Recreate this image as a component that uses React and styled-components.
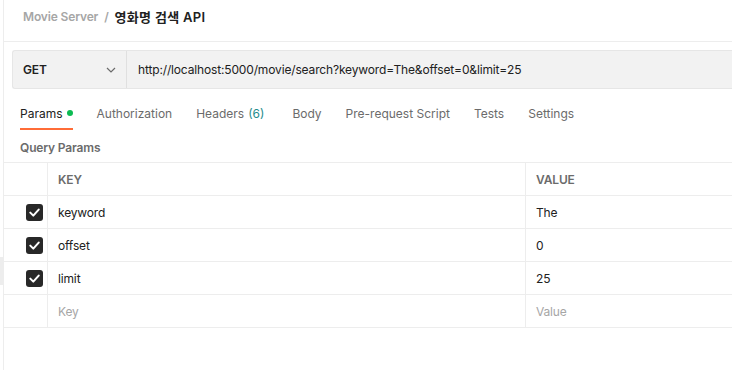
import React from 'react';
import styled, { createGlobalStyle } from 'styled-components';

const GlobalStyle = createGlobalStyle`
  body {
    margin: 0;
    background: #fff;
    font-family: Inter, "Noto Sans", "Noto Sans CJK KR", sans-serif;
    letter-spacing: -0.15px;
    color: #212121;
  }
`;

const Page = styled.div`
  display: flex;
  width: 732px;
  height: 370px;
  overflow: hidden;
  background: #fff;
`;

const SideStrip = styled.div`
  width: 3px;
  flex-shrink: 0;
  border-right: 1px solid #ededed;
  padding-top: 257px;
`;

const SideMark = styled.div`
  height: 28px;
  background: #ededed;
`;

const Main = styled.div`
  flex: 1;
  display: flex;
  flex-direction: column;
  min-width: 0;
`;

const Header = styled.header`
  height: 33px;
  padding: 0 19px 8px;
  display: flex;
  align-items: center;
  gap: 6px;
  border-bottom: 1px solid #ededed;
  font-size: 12px;
  font-weight: 600;
`;

const Crumb = styled.span`
  color: ${({ muted }) => (muted ? '#a6a6a6' : '#212121')};
  font-size: ${({ muted }) => (muted ? 12 : 13)}px;
  letter-spacing: ${({ muted }) => (muted ? '-0.15px' : '0.3px')};
`;

const UrlBar = styled.div`
  display: flex;
  height: 37px;
  margin: 8px 0 0 8px;
  border: 1px solid #e6e6e6;
  border-right: none;
  border-radius: 3px 0 0 3px;
  background: #f2f2f2;
`;

const Method = styled.div`
  width: 114px;
  display: flex;
  align-items: center;
  justify-content: space-between;
  padding: 0 10px 0 10px;
  box-sizing: border-box;
  border-right: 1px solid #e0e0e0;
  font-size: 12px;
  font-weight: 600;
`;

const Url = styled.div`
  display: flex;
  align-items: center;
  padding-left: 11px;
  font-size: 12px;
  color: #212121;
`;

const Tabs = styled.nav`
  display: flex;
  gap: 24px;
  padding: 12px 0 0 16px;
`;

const Tab = styled.div`
  display: flex;
  align-items: center;
  gap: 4px;
  height: 29px;
  padding-bottom: 3px;
  margin-right: ${({ extra }) => extra || 0}px;
  font-size: 12px;
  letter-spacing: 0;
  color: ${({ active }) => (active ? '#212121' : '#6b6b6b')};
  border-bottom: 2px solid ${({ active }) => (active ? '#ff6c37' : 'transparent')};
  box-sizing: border-box;
`;

const Dot = styled.span`
  width: 6px;
  height: 6px;
  border-radius: 50%;
  background: #0cbb52;
`;

const Count = styled.span`
  color: #1e8c8c;
`;

const SectionTitle = styled.div`
  height: 32px;
  padding-top: 2px;
  box-sizing: border-box;
  display: flex;
  align-items: center;
  padding-left: 16px;
  font-size: 12px;
  font-weight: 600;
  color: #6b6b6b;
`;

const Table = styled.div`
  display: grid;
  grid-template-columns: 44px 478px 1fr;
  border-top: 1px solid #ededed;
`;

const Cell = styled.div`
  height: 33px;
  display: flex;
  align-items: center;
  justify-content: ${({ check }) => (check ? 'flex-end' : 'flex-start')};
  padding: 0 ${({ check }) => (check ? 4 : 0)}px 0 ${({ check }) => (check ? 0 : 10)}px;
  border-bottom: 1px solid #ededed;
  border-right: ${({ last }) => (last ? 'none' : '1px solid #ededed')};
  font-size: 12px;
  font-weight: ${({ head }) => (head ? 600 : 400)};
  color: ${({ head, placeholder }) => (head ? '#6b6b6b' : placeholder ? '#a6a6a6' : '#212121')};
  box-sizing: border-box;
`;

const Check = styled.span`
  width: 17px;
  height: 17px;
  border-radius: 3px;
  background: #282828;
  display: flex;
  align-items: center;
  justify-content: center;
`;

const Chevron = () => (
  <svg width="10" height="6" viewBox="0 0 10 6">
    <path d="M1 1l4 4 4-4" fill="none" stroke="#6b6b6b" strokeWidth="1.2" />
  </svg>
);

const CheckMark = () => (
  <svg width="11" height="9" viewBox="0 0 11 9">
    <path d="M1.3 4.6l3 3 5.4-6" fill="none" stroke="#fff" strokeWidth="2" strokeLinecap="round" strokeLinejoin="round" />
  </svg>
);

const params = [
  { key: 'keyword', value: 'The' },
  { key: 'offset', value: '0' },
  { key: 'limit', value: '25' },
];

const tabs = ['Authorization', 'Headers', 'Body', 'Pre-request Script', 'Tests', 'Settings'];

export default function App() {
  return (
    <>
      <GlobalStyle />
      <Page>
        <SideStrip>
          <SideMark />
        </SideStrip>
        <Main>
          <Header>
            <Crumb muted>Movie Server</Crumb>
            <Crumb muted>/</Crumb>
            <Crumb>영화명 검색 API</Crumb>
          </Header>
          <UrlBar>
            <Method>
              GET
              <Chevron />
            </Method>
            <Url>http://localhost:5000/movie/search?keyword=The&amp;offset=0&amp;limit=25</Url>
          </UrlBar>
          <Tabs>
            <Tab active>
              Params <Dot />
            </Tab>
            {tabs.map((t) =>
              t === 'Headers' ? (
                <Tab key={t} extra={4}>
                  Headers <Count>(6)</Count>
                </Tab>
              ) : (
                <Tab key={t}>{t}</Tab>
              )
            )}
          </Tabs>
          <SectionTitle>Query Params</SectionTitle>
          <Table>
            <Cell />
            <Cell head>KEY</Cell>
            <Cell head last>VALUE</Cell>
            {params.map((p) => (
              <React.Fragment key={p.key}>
                <Cell check>
                  <Check>
                    <CheckMark />
                  </Check>
                </Cell>
                <Cell>{p.key}</Cell>
                <Cell last>{p.value}</Cell>
              </React.Fragment>
            ))}
            <Cell />
            <Cell placeholder>Key</Cell>
            <Cell placeholder last>Value</Cell>
          </Table>
        </Main>
      </Page>
    </>
  );
}
